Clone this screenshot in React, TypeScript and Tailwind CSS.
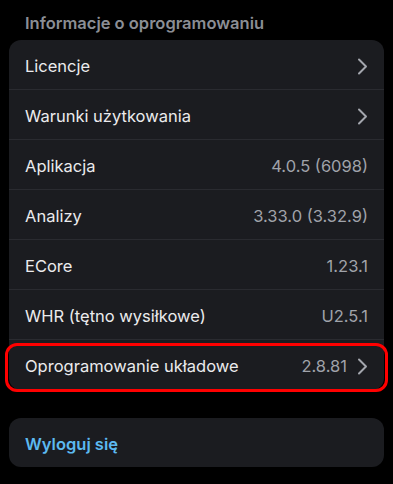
const rows = [
  { label: 'Licencje', chevron: true },
  { label: 'Warunki użytkowania', chevron: true },
  { label: 'Aplikacja', value: '4.0.5 (6098)' },
  { label: 'Analizy', value: '3.33.0 (3.32.9)' },
  { label: 'ECore', value: '1.23.1' },
  { label: 'WHR (tętno wysiłkowe)', value: 'U2.5.1' },
  { label: 'Oprogramowanie układowe', value: '2.8.81', chevron: true, highlight: true },
];

const Chevron = () => (
  <svg width="11" height="17" viewBox="0 0 11 17" fill="none" className="ml-[10px] shrink-0">
    <path d="M2 1.5 L9 8.5 L2 15.5" stroke="#a3a6ad" strokeWidth="2" strokeLinecap="round" strokeLinejoin="round" />
  </svg>
);

export default function App() {
  return (
    <div className="w-[393px] h-[484px] bg-black overflow-hidden" style={{ fontFamily: 'Inter, "Noto Sans", sans-serif' }}>
      <div className="h-[40px] pl-[25px] flex items-center pt-[6px]">
        <span className="text-[16.5px] font-semibold text-[#8b8e95]">Informacje o oprogramowaniu</span>
      </div>
      <div className="mx-[9px] rounded-[12px] bg-[#1b1c20]">
        {rows.map((r, i) => (
          <div key={i} className={`relative h-[50px] flex items-center pl-[16px] pr-[16px] pt-[3px] ${i < rows.length - 1 ? 'border-b border-[#2a2b30]' : ''}`}>
            <span className="text-[16.5px] text-[#ebebed] flex-1">{r.label}</span>
            {r.value && <span className="text-[16.5px] text-[#a0a3aa]">{r.value}</span>}
            {r.chevron && <Chevron />}
            {r.highlight && (
              <div className="absolute left-[-4px] right-[-4px] top-[3px] bottom-[-2px] border-[3px] border-[#ff0000] rounded-[12px] pointer-events-none" />
            )}
          </div>
        ))}
      </div>
      <div className="mx-[9px] mt-[28px] h-[49px] rounded-[12px] bg-[#1b1c20] flex items-center pl-[16px] pt-[3px]">
        <span className="text-[16.5px] font-semibold text-[#5cb9f0]">Wyloguj się</span>
      </div>
    </div>
  );
}
